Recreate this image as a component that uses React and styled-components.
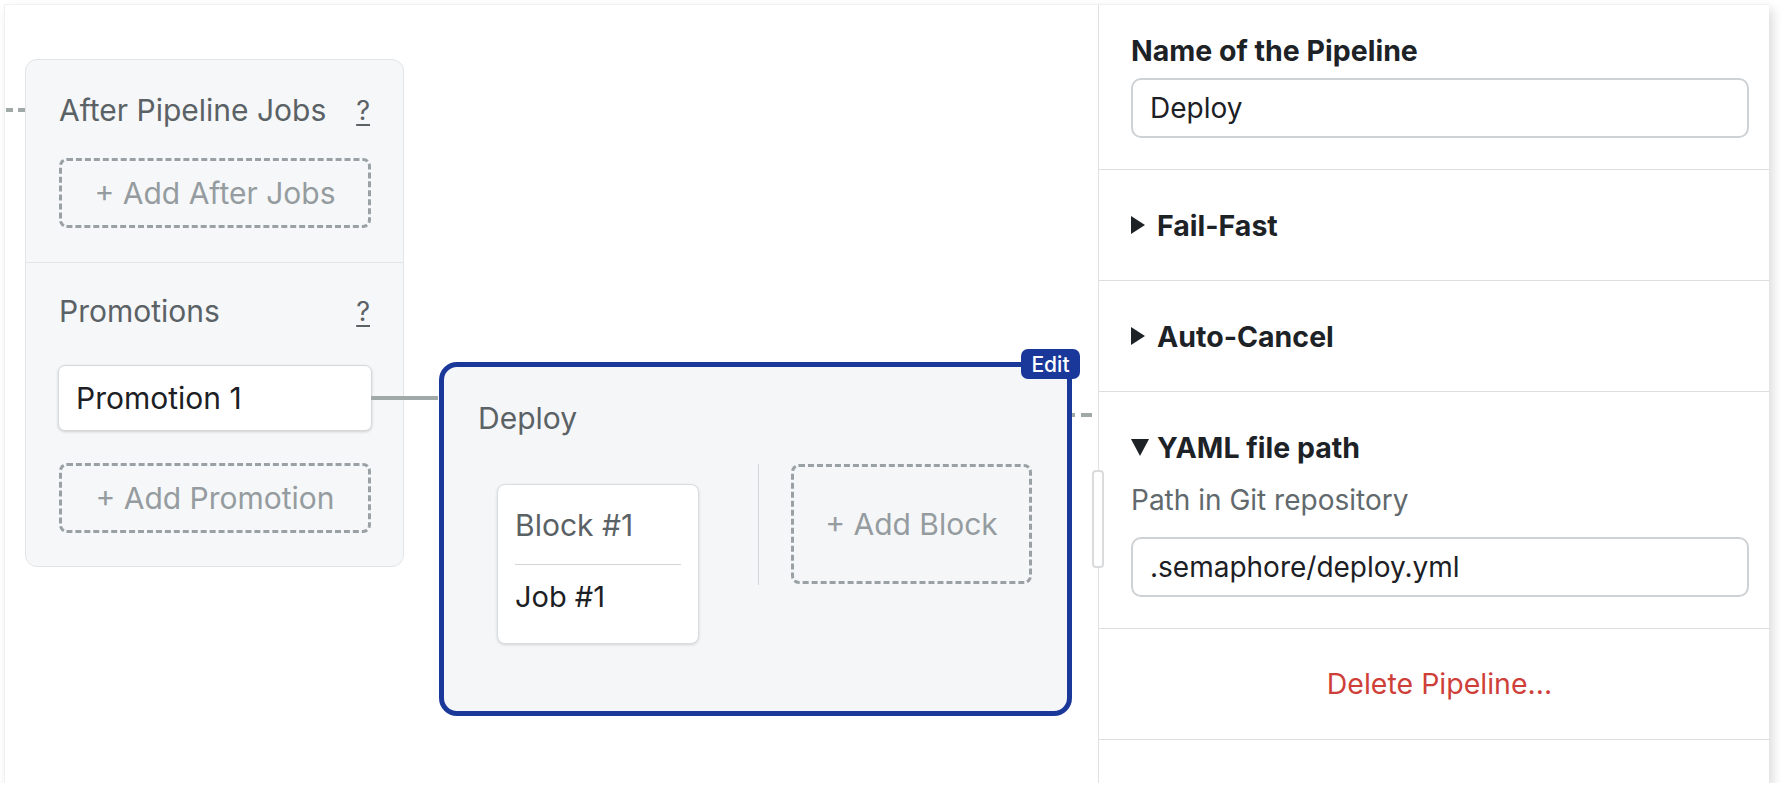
import React from "react";
import styled, { createGlobalStyle } from "styled-components";

const GlobalStyle = createGlobalStyle`
  html, body {
    margin: 0;
    padding: 0;
    background: #fff;
  }
  body {
    font-family: "Inter", "Liberation Sans", sans-serif;
    -webkit-font-smoothing: antialiased;
  }
  * {
    box-sizing: border-box;
  }
`;

const Frame = styled.div`
  margin: 4px 0 0 4px;
  width: 1765px;
  height: 779px;
  display: flex;
  background: #fff;
  border-top: 1px solid #f0f1f2;
  border-left: 1px solid #f0f1f2;
  box-shadow: 4px 5px 10px rgba(0, 0, 0, 0.14);
`;

const Canvas = styled.div`
  flex: 1;
  display: flex;
  align-items: flex-start;
  padding: 54px 0 0 20px;
`;

const SideCard = styled.div`
  position: relative;
  width: 379px;
  background: #f6f7f8;
  border: 1px solid #e2e4e6;
  border-radius: 12px;

  &::before {
    content: "";
    position: absolute;
    left: -20px;
    top: 48px;
    width: 20px;
    height: 4px;
    background: repeating-linear-gradient(to right, #a0a8a8 0 7px, transparent 7px 12px);
  }
`;

const SideSection = styled.div`
  padding: ${(p) => (p.$first ? "34px 32px 34px 33px" : "32px 32px 33px 33px")};
  border-top: ${(p) => (p.$first ? "none" : "1px solid #e2e4e6")};
`;

const SectionHead = styled.div`
  display: flex;
  justify-content: space-between;
  align-items: center;
  height: 32px;
  font-size: 30px;
  color: #5b6266;
`;

const Help = styled.span`
  font-size: 27px;
  text-decoration: underline;
  text-underline-offset: 4px;
  margin-right: 1px;
`;

const DashedButton = styled.div`
  display: flex;
  align-items: center;
  justify-content: center;
  width: ${(p) => p.$w || 312}px;
  height: ${(p) => p.$h || 70}px;
  margin-top: ${(p) => p.$mt || 0}px;
  border: 3px dashed #9aa1a4;
  border-radius: 8px;
  font-size: 30px;
  color: #959ca0;
`;

const PromotionBox = styled.div`
  position: relative;
  display: flex;
  align-items: center;
  width: 314px;
  height: 66px;
  margin: 38px 0 0 -1px;
  padding-left: 17px;
  background: #fff;
  border: 1px solid #d6d9db;
  border-radius: 7px;
  box-shadow: 0 1px 3px rgba(0, 0, 0, 0.16);
  font-size: 30px;
  color: #1c2024;

  &::after {
    content: "";
    position: absolute;
    left: 100%;
    top: 30px;
    width: 67px;
    height: 4px;
    background: #a0a8a8;
  }
`;

const PipelineCard = styled.div`
  position: relative;
  width: 633px;
  height: 354px;
  margin: 303px 0 0 35px;
  padding: 35px 35px 0 34px;
  background: #f5f6f8;
  border: 5px solid #19389a;
  border-radius: 18px;

  &::after {
    content: "";
    position: absolute;
    left: calc(100% + 5px);
    top: 46px;
    width: 21px;
    height: 4px;
    background: linear-gradient(
      to right,
      #a0a8a8 0 3px,
      transparent 3px 9px,
      #a0a8a8 9px 20px,
      transparent 20px
    );
  }
`;

const EditBadge = styled.div`
  position: absolute;
  top: -18px;
  right: -13px;
  width: 59px;
  height: 30px;
  display: flex;
  align-items: center;
  justify-content: center;
  background: #19389a;
  border-radius: 7px;
  color: #fff;
  font-size: 21px;
  font-weight: 500;
`;

const PipelineTitle = styled.div`
  height: 32px;
  line-height: 32px;
  font-size: 30px;
  color: #5b6266;
`;

const BlockRow = styled.div`
  display: flex;
  align-items: flex-start;
  margin-top: 30px;
  padding-left: 19px;
`;

const BlockCard = styled.div`
  width: 202px;
  height: 160px;
  margin-top: 20px;
  padding: 24px 17px 0;
  background: #fff;
  border: 1px solid #dadde0;
  border-radius: 8px;
  box-shadow: 0 1px 3px rgba(0, 0, 0, 0.14);
`;

const BlockName = styled.div`
  height: 32px;
  line-height: 32px;
  font-size: 30px;
  color: #5b6266;
`;

const BlockDivider = styled.div`
  height: 1px;
  margin-top: 23px;
  background: #d3d6d8;
`;

const JobName = styled.div`
  height: 32px;
  line-height: 32px;
  margin-top: 16px;
  font-size: 29px;
  color: #1c2024;
`;

const RowSeparator = styled.div`
  width: 1px;
  height: 121px;
  margin: 0 32px 0 59px;
  background: #d3d6d8;
`;

const Panel = styled.div`
  position: relative;
  width: 671px;
  display: flex;
  flex-direction: column;
  border-left: 1px solid #dfe1e3;
`;

const ResizeHandle = styled.div`
  position: absolute;
  left: -7px;
  top: 465px;
  width: 12px;
  height: 98px;
  background: #fff;
  border: 2px solid #d9dbdd;
  border-radius: 4px;
`;

const PanelSection = styled.div`
  padding: ${(p) => p.$pad || "39px 21px 39px 32px"};
  border-bottom: 1px solid #dcdfe1;
  text-align: ${(p) => (p.$center ? "center" : "left")};
`;

const Label = styled.div`
  display: flex;
  align-items: center;
  height: 32px;
  font-size: 28.5px;
  font-weight: 700;
  color: #1d2226;
`;

const Arrow = styled.span`
  display: inline-block;
  width: 0;
  height: 0;
  margin-right: ${(p) => (p.$open ? 8 : 12)}px;
  ${(p) =>
    p.$open
      ? `border-left: 9px solid transparent;
         border-right: 9px solid transparent;
         border-top: 17px solid #1d2226;`
      : `border-top: 9px solid transparent;
         border-bottom: 9px solid transparent;
         border-left: 14px solid #1d2226;`}
`;

const Hint = styled.div`
  height: 32px;
  line-height: 32px;
  margin-top: 21px;
  font-size: 28px;
  color: #62696d;
`;

const TextInput = styled.input`
  display: block;
  width: 618px;
  height: 60px;
  margin-top: ${(p) => p.$mt || 12}px;
  padding: 0 17px;
  border: 2px solid #cfd2d4;
  border-radius: 10px;
  background: #fff;
  font-family: inherit;
  font-size: 28px;
  color: #1c2024;
  outline: none;
`;

const DangerLink = styled.span`
  display: inline-block;
  height: 32px;
  line-height: 32px;
  font-size: 28.5px;
  color: #cf3f3a;
`;

export default function App() {
  return (
    <>
      <GlobalStyle />
      <Frame>
        <Canvas>
          <SideCard>
            <SideSection $first>
              <SectionHead>
                After Pipeline Jobs <Help>?</Help>
              </SectionHead>
              <DashedButton $mt={32}>+ Add After Jobs</DashedButton>
            </SideSection>
            <SideSection>
              <SectionHead>
                Promotions <Help>?</Help>
              </SectionHead>
              <PromotionBox>Promotion 1</PromotionBox>
              <DashedButton $mt={32}>+ Add Promotion</DashedButton>
            </SideSection>
          </SideCard>

          <PipelineCard>
            <EditBadge>Edit</EditBadge>
            <PipelineTitle>Deploy</PipelineTitle>
            <BlockRow>
              <BlockCard>
                <BlockName>Block #1</BlockName>
                <BlockDivider />
                <JobName>Job #1</JobName>
              </BlockCard>
              <RowSeparator />
              <DashedButton $w={241} $h={120}>
                + Add Block
              </DashedButton>
            </BlockRow>
          </PipelineCard>
        </Canvas>

        <Panel>
          <ResizeHandle />
          <PanelSection $pad="29px 21px 31px 32px">
            <Label>Name of the Pipeline</Label>
            <TextInput defaultValue="Deploy" />
          </PanelSection>
          <PanelSection>
            <Label>
              <Arrow />
              Fail-Fast
            </Label>
          </PanelSection>
          <PanelSection>
            <Label>
              <Arrow />
              Auto-Cancel
            </Label>
          </PanelSection>
          <PanelSection $pad="39px 21px 31px 32px">
            <Label>
              <Arrow $open />
              YAML file path
            </Label>
            <Hint>Path in Git repository</Hint>
            <TextInput $mt={21} defaultValue=".semaphore/deploy.yml" />
          </PanelSection>
          <PanelSection $center>
            <DangerLink>Delete Pipeline...</DangerLink>
          </PanelSection>
        </Panel>
      </Frame>
    </>
  );
}
